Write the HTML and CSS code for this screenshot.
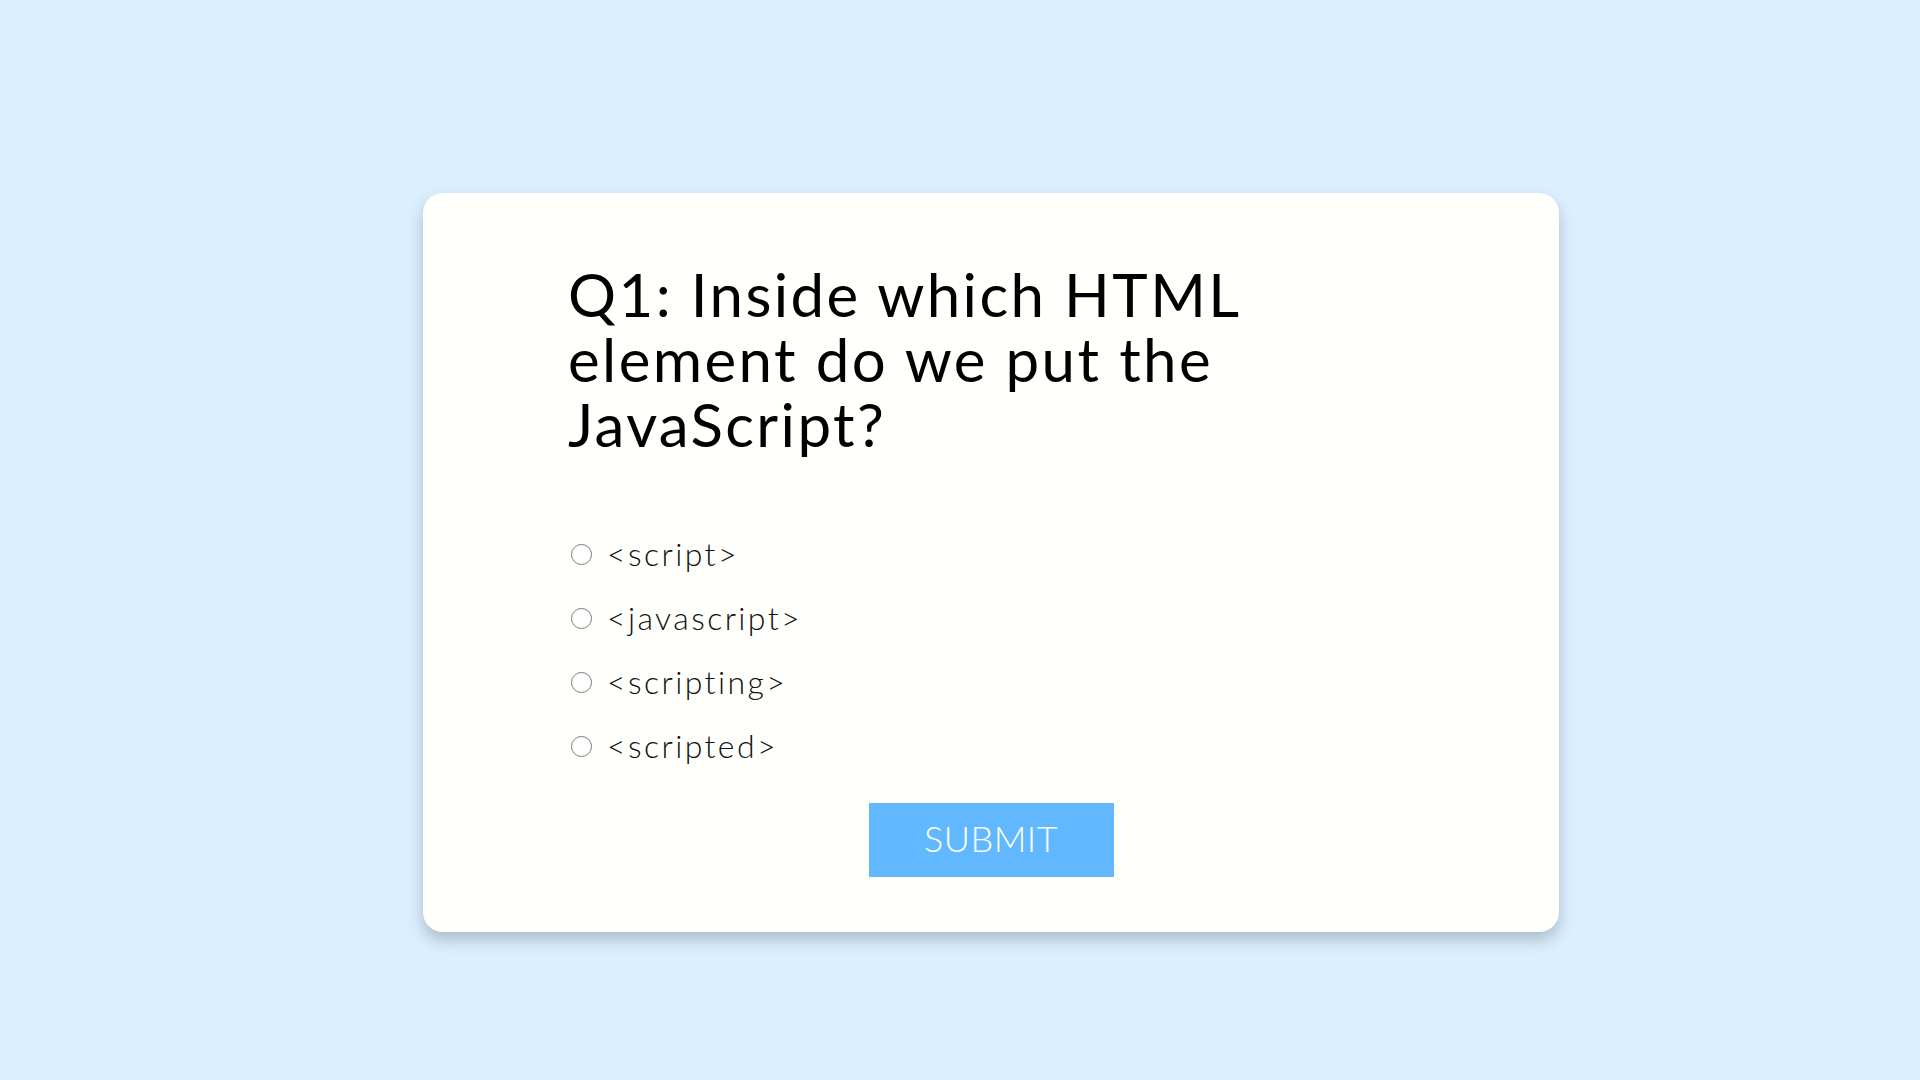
FILE: index.html
```html
<!DOCTYPE html>
<html lang="en">
<head>
<meta charset="utf-8">
<title>Quiz</title>
<link rel="stylesheet" href="styles.css">
</head>
<body>
<main class="page">
  <section class="card">
    <h2 class="question">Q1: Inside which HTML element do we put the JavaScript?</h2>
    <ul class="answers">
      <li class="answer"><input type="radio" name="answer" id="a" class="radio"><label for="a">&lt;script&gt;</label></li>
      <li class="answer"><input type="radio" name="answer" id="b" class="radio"><label for="b">&lt;javascript&gt;</label></li>
      <li class="answer"><input type="radio" name="answer" id="c" class="radio"><label for="c">&lt;scripting&gt;</label></li>
      <li class="answer"><input type="radio" name="answer" id="d" class="radio"><label for="d">&lt;scripted&gt;</label></li>
    </ul>
    <button class="submit" type="button">SUBMIT</button>
  </section>
</main>
</body>
</html>
```

FILE: styles.css
```css
* { box-sizing: border-box; }
html, body { margin: 0; padding: 0; }
body {
  background: #dbf0ff;
  font-family: "Lato", "Liberation Sans", sans-serif;
}
.page {
  min-height: 100vh;
  display: flex;
  justify-content: center;
  align-items: center;
  padding: 45px 0 0 62px;
}
.card {
  width: 1136px;
  background: #fffffb;
  border-radius: 20px;
  box-shadow: 0 8px 16px rgba(0, 0, 0, 0.22);
  padding: 69px 145px 55px 145px;
  display: flex;
  flex-direction: column;
}
.question {
  margin: 0;
  width: 720px;
  font-size: 60px;
  line-height: 65px;
  font-weight: 400;
  letter-spacing: 2.4px;
  color: #000;
}
.answers {
  list-style: none;
  margin: 77px 0 0 0;
  padding: 0;
  display: flex;
  flex-direction: column;
  gap: 24px;
}
.answer {
  display: flex;
  align-items: center;
  gap: 15px;
  height: 40px;
  font-size: 32px;
  line-height: 40px;
  font-weight: 300;
  color: #111;
  letter-spacing: 2.4px;
}
.radio {
  appearance: none;
  -webkit-appearance: none;
  margin: 0 0 0 3px;
  width: 21px;
  height: 21px;
  border: 1.8px solid #7a7a7a;
  border-radius: 50%;
  background: #fff;
  flex: none;
}
.submit {
  align-self: center;
  margin-top: 37px;
  width: 245px;
  height: 74px;
  border: none;
  background: #62b8ff;
  color: #fff;
  font-family: "Lato", "Liberation Sans", sans-serif;
  font-size: 36px;
  font-weight: 300;
  letter-spacing: 0.5px;
  padding: 0 0 4px 0;
}
```
